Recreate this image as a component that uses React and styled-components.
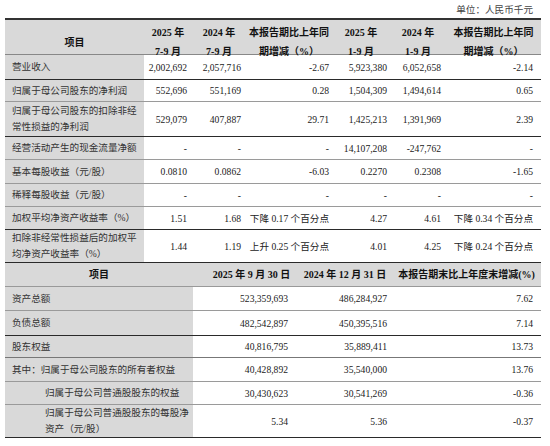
import React from "react";
import styled, { createGlobalStyle } from "styled-components";

const GlobalStyle = createGlobalStyle`
  body {
    margin: 0;
    background: #fff;
  }
`;

const TOP_COLS = "139px 48px 54px 86px 58px 56px 95px";
const TOP_PAD = [7, 5, 5, 3, 3, 5, 8];
const BOTTOM_COLS = "188px 105px 94px 149px";
const BOTTOM_PAD = [7, 10, 5, 8];

const DARK = "#2a2a2a";
const GRAY = "#9a9a9a";

const topRows = [
  { h: 25, line: DARK, label: "营业收入", v: ["2,002,692", "2,057,716", "-2.67", "5,923,380", "6,052,658", "-2.14"] },
  { h: 22, line: GRAY, label: "归属于母公司股东的净利润", v: ["552,696", "551,169", "0.28", "1,504,309", "1,494,614", "0.65"] },
  { h: 35, line: DARK, label: ["归属于母公司股东的扣除非经", "常性损益的净利润"], v: ["529,079", "407,887", "29.71", "1,425,213", "1,391,969", "2.39"] },
  { h: 23, line: GRAY, label: "经营活动产生的现金流量净额", v: ["-", "-", "-", "14,107,208", "-247,762", "-"] },
  { h: 24, line: GRAY, label: "基本每股收益（元/股）", v: ["0.0810", "0.0862", "-6.03", "0.2270", "0.2308", "-1.65"] },
  { h: 23, line: GRAY, label: "稀释每股收益（元/股）", v: ["-", "-", "-", "-", "-", "-"] },
  { h: 23, line: DARK, label: "加权平均净资产收益率（%）", v: ["1.51", "1.68", "下降 0.17 个百分点", "4.27", "4.61", "下降 0.34 个百分点"] },
  { h: 33, line: DARK, label: ["扣除非经常性损益后的加权平", "均净资产收益率（%）"], v: ["1.44", "1.19", "上升 0.25 个百分点", "4.01", "4.25", "下降 0.24 个百分点"] },
];

const bottomRows = [
  { h: 24, line: GRAY, indent: 7, label: "资产总额", v: ["523,359,693", "486,284,927", "7.62"] },
  { h: 25, line: DARK, indent: 7, label: "负债总额", v: ["482,542,897", "450,395,516", "7.14"] },
  { h: 22, line: "#777", indent: 7, label: "股东权益", v: ["40,816,795", "35,889,411", "13.73"] },
  { h: 24, line: GRAY, indent: 7, label: "其中：归属于母公司股东的所有者权益", v: ["40,428,892", "35,540,000", "13.76"] },
  { h: 23, line: GRAY, indent: 40, label: "归属于母公司普通股股东的权益", v: ["30,430,623", "30,541,269", "-0.36"] },
  { h: 33, line: DARK, indent: 40, label: ["归属于母公司普通股股东的每股净", "资产（元/股）"], v: ["5.34", "5.36", "-0.37"] },
];

const lines = text =>
  Array.isArray(text)
    ? text.map((t, i) => (
        <React.Fragment key={i}>
          {i > 0 && <br />}
          {t}
        </React.Fragment>
      ))
    : text;

const App = () => (
  <Page>
    <GlobalStyle />
    <Unit>单位：人民币千元</Unit>
    <Table>
      <Row $cols={TOP_COLS} $h={35} $line="#888" $head $padTop={3}>
        <HeadCell>项目</HeadCell>
        <HeadCell>2025 年<br />7-9 月</HeadCell>
        <HeadCell>2024 年<br />7-9 月</HeadCell>
        <HeadCell>本报告期比上年同<br />期增减（%）</HeadCell>
        <HeadCell>2025 年<br />1-9 月</HeadCell>
        <HeadCell>2024 年<br />1-9 月</HeadCell>
        <HeadCell>本报告期比上年同<br />期增减（%）</HeadCell>
      </Row>
      {topRows.map((r, i) => (
        <Row key={i} $cols={TOP_COLS} $h={r.h} $line={r.line}>
          <Label $pl={TOP_PAD[0]}>{lines(r.label)}</Label>
          {r.v.map((v, j) => (
            <Value key={j} $pr={TOP_PAD[j + 1]}>{v}</Value>
          ))}
        </Row>
      ))}
      <Row $cols={BOTTOM_COLS} $h={24} $line="#999" $head>
        <HeadCell>项目</HeadCell>
        <HeadCell $shift={6}>2025 年 9 月 30 日</HeadCell>
        <HeadCell>2024 年 12 月 31 日</HeadCell>
        <HeadCell>本报告期末比上年度末增减(%)</HeadCell>
      </Row>
      {bottomRows.map((r, i) => (
        <Row key={i} $cols={BOTTOM_COLS} $h={r.h} $line={r.line}>
          <Label $pl={r.indent}>{lines(r.label)}</Label>
          {r.v.map((v, j) => (
            <Value key={j} $pr={BOTTOM_PAD[j + 1]}>{v}</Value>
          ))}
        </Row>
      ))}
    </Table>
  </Page>
);

export default App;

const Page = styled.div`
  width: 550px;
  height: 446px;
  background: #fff;
  font-family: "Liberation Serif", "Noto Sans CJK SC", serif;
  color: #222;
  overflow: hidden;
`;

const Unit = styled.div`
  height: 18px;
  padding-right: 17px;
  text-align: right;
  font-size: 9.6px;
  line-height: 20px;
  color: #444;
`;

const Table = styled.div`
  width: 536px;
  margin-left: 5px;
  border-top: 2px solid #333;
`;

const Row = styled.div`
  display: grid;
  grid-template-columns: ${p => p.$cols};
  height: ${p => p.$h}px;
  box-sizing: border-box;
  padding-top: ${p => p.$padTop || 0}px;
  border-bottom: 1px solid ${p => p.$line};
  background: ${p => (p.$head ? "#d9d9d9" : "transparent")};
`;

const HeadCell = styled.div`
  display: flex;
  align-items: center;
  justify-content: center;
  text-align: center;
  padding-left: ${p => (p.$shift || 0) * 2}px;
  font-size: 10px;
  line-height: 19px;
  font-weight: bold;
  color: #111;
  white-space: nowrap;
`;

const Label = styled.div`
  display: flex;
  align-items: center;
  padding-left: ${p => p.$pl}px;
  background: #d9d9d9;
  font-size: 9.6px;
  line-height: 16px;
  color: #333;
  white-space: nowrap;
`;

const Value = styled.div`
  display: flex;
  align-items: center;
  justify-content: flex-end;
  padding-right: ${p => p.$pr}px;
  font-size: 9.6px;
  color: #222;
  white-space: nowrap;
`;
